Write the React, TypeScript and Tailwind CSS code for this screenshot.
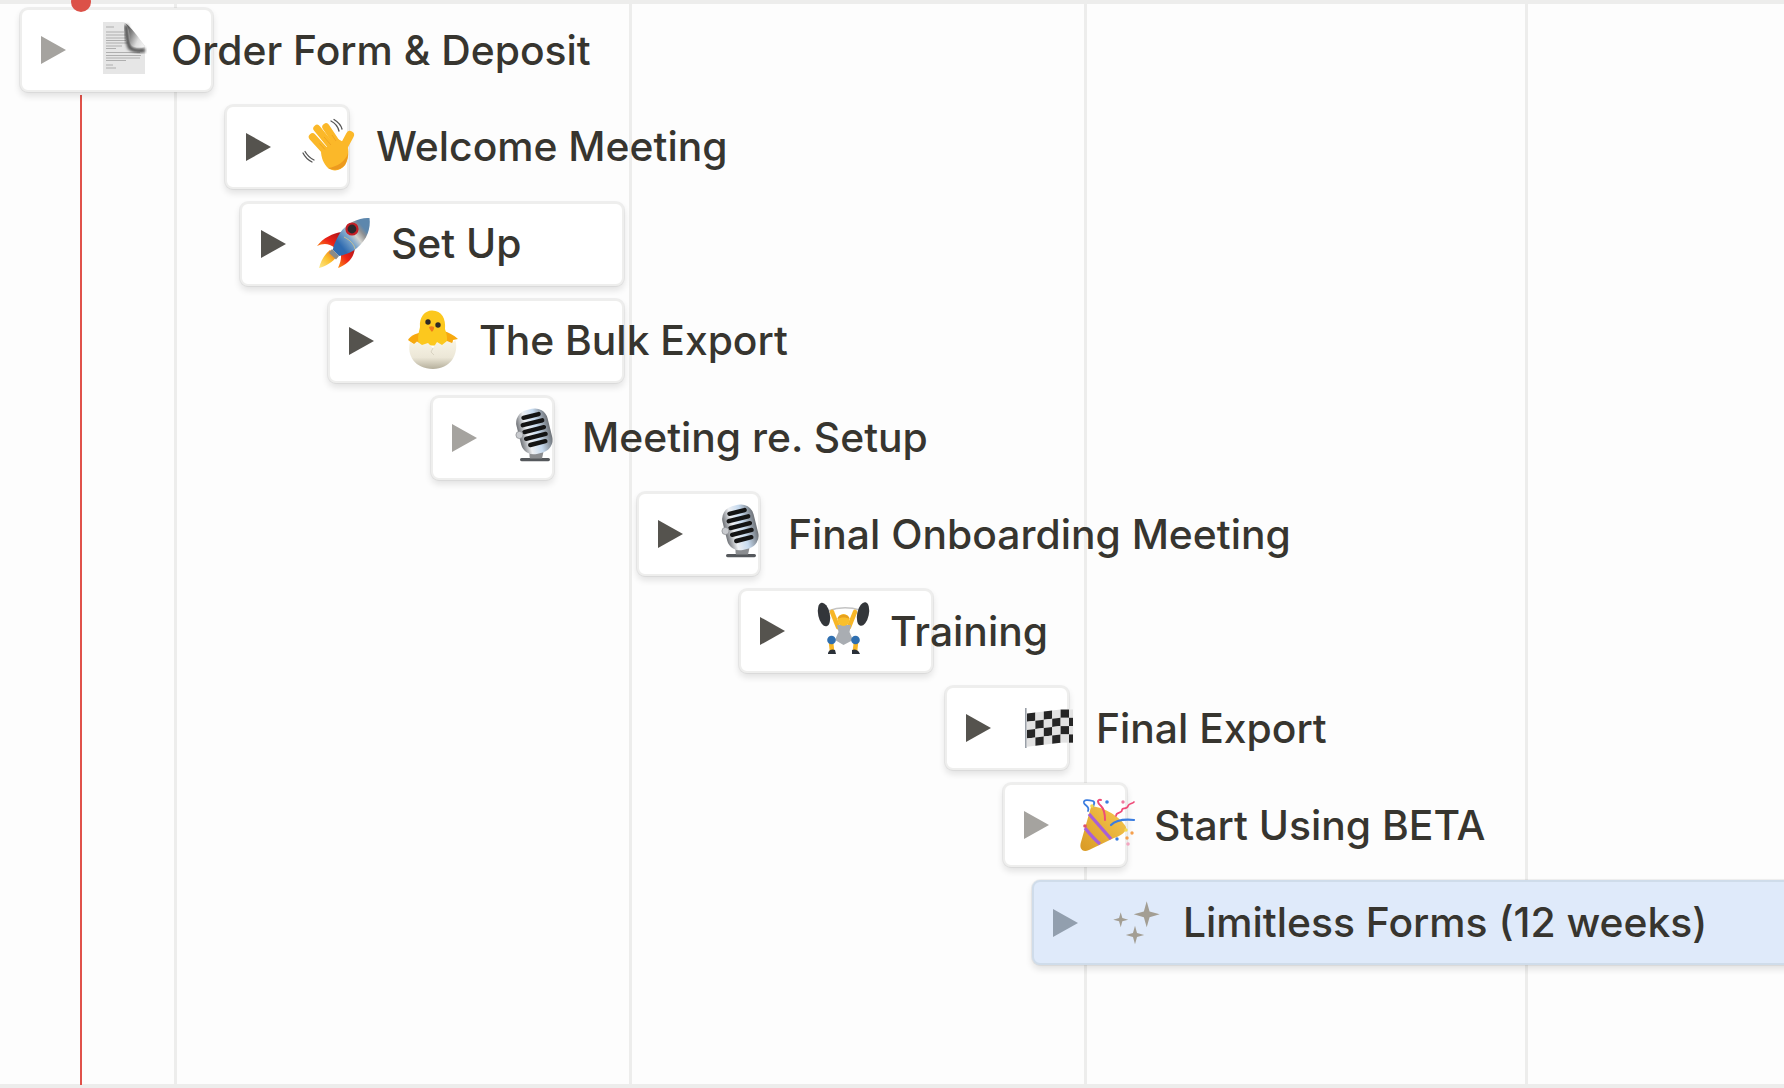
import React from 'react';

function Arrow({ color }: { color: string }) {
  return (
    <svg width="25" height="28" viewBox="0 0 25 28" className="shrink-0">
      <path d="M0 0 L25 14 L0 28 Z" fill={color} />
    </svg>
  );
}

function Slot({ view, children }: { view: string; children: React.ReactNode }) {
  return (
    <svg width="70" height="70" viewBox={view} className="shrink-0 ml-[23px] mr-[12px] overflow-visible">
      {children}
    </svg>
  );
}

function DocIcon() {
  const lines = [
    [16, 12, 24], [16, 17, 34], [16, 20, 36], [16, 23, 36], [16, 25.5, 36], [16, 28, 38], [16, 31, 32], [16, 33.5, 26],
    [16, 37.5, 50], [16, 40.5, 51], [16, 43, 50], [16, 45.5, 36], [16, 50, 23], [16, 53, 26],
  ];
  return (
    <Slot view="-1 0 70 70">
      <defs>
        <linearGradient id="docFold" x1="0" y1="0.2" x2="1" y2="0.7">
          <stop offset="0" stopColor="#3d3d3d" />
          <stop offset="0.4" stopColor="#858585" />
          <stop offset="0.75" stopColor="#dedede" />
          <stop offset="1" stopColor="#f0f0f0" />
        </linearGradient>
        <filter id="docBlur"><feGaussianBlur stdDeviation="1.8" /></filter>
        <filter id="docSoft"><feGaussianBlur stdDeviation="0.5" /></filter>
      </defs>
      <path d="M13 7 H33 C42 12 48 22 55 31 V59 H13 Z" fill="#e6e6e6" />
      <g filter="url(#docSoft)">
        {lines.map(([x, y, e], i) => (
          <path key={i} d={`M${x} ${y} H${e}`} stroke="#a8a8a8" strokeWidth="0.9" />
        ))}
      </g>
      <path d="M36 10 C37 18 37 28 40 33 C44 36 50 36 55 35" stroke="#4a4a4a" strokeWidth="4" fill="none" filter="url(#docBlur)" />
      <path d="M33 7 C38 9 39.5 16 39.5 23 C39.500 31 44 34 55 32 C48 22 42 12 33 7 Z" fill="url(#docFold)" filter="url(#docSoft)" />
    </Slot>
  );
}

function WaveIcon() {
  return (
    <Slot view="0 2 70 70">
      <g stroke="#fbb829" strokeWidth="7.4" strokeLinecap="round" fill="none">
        <path d="M18.500 27 L34 44" />
        <path d="M23 18.500 L38 37" />
        <path d="M32 17 L44 35" />
        <path d="M56 25 L49 38" strokeWidth="8" />
      </g>
      <path d="M27 41 L44 29 L53 34 C55 41 55 48 51 55 C47 61 39 62 34 58 C30 54 27 48 27 41 Z" fill="#fbb829" />
      <path d="M25.500 33.500 L31 39.500 M30 27 L37 35 M38 25 L42 31" stroke="#ee9f1f" strokeWidth="0.8" fill="none" />
      <path d="M34 58 C40 61 47 60 51 55 C53 51 54 47 54 43 C52 51 43 57 34 58 Z" fill="#ec9a1e" />
      <g stroke="#555" strokeWidth="1.3" fill="none" strokeLinecap="round">
        <path d="M37 11 C41 13 44 17 45 21" />
        <path d="M40 9.500 C44 12 47 15 48 19" />
        <path d="M9 43 C11 47 14 50 18 52" />
        <path d="M11 41.500 C13 45 16 48 20 50" />
      </g>
    </Slot>
  );
}

function RocketIcon() {
  return (
    <Slot view="0 -1 70 70">
      <defs>
        <linearGradient id="rkBody" x1="0.1" y1="0.6" x2="0.7" y2="0.1">
          <stop offset="0" stopColor="#2f6bb0" />
          <stop offset="0.4" stopColor="#7fa8cc" />
          <stop offset="0.62" stopColor="#d4d4d0" />
          <stop offset="0.85" stopColor="#8f9092" />
          <stop offset="1" stopColor="#5d87ad" />
        </linearGradient>
        <linearGradient id="rkFin" x1="1" y1="0" x2="0" y2="1">
          <stop offset="0" stopColor="#a5111a" />
          <stop offset="0.55" stopColor="#ee2417" />
          <stop offset="1" stopColor="#fb9419" />
        </linearGradient>
        <linearGradient id="rkFlame" x1="1" y1="0" x2="0" y2="1">
          <stop offset="0" stopColor="#ef5e12" />
          <stop offset="0.5" stopColor="#fbc02d" />
          <stop offset="1" stopColor="#fdeb8e" />
        </linearGradient>
      </defs>
      <path d="M33 22 C24 23 14 28 8 36 C14 33 20 33 26 38 Z" fill="url(#rkFin)" />
      <path d="M46 35 C46 46 41 53 29 58 C32 51 33 46 31 42 Z" fill="url(#rkFin)" />
      <path d="M21 40 C16 44 12 50 10 58 C17 56 24 52 28 46 Z" fill="url(#rkFlame)" />
      <path d="M60.500 8 C52 7 38 12 31 23 C27 30 24 36 24 40 L30 46 C35 45 42 43 48 38 C58 30 62 18 60.500 8 Z" fill="url(#rkBody)" />
      <path d="M35 27 C41 30 45 34 46 39" stroke="#d8c78a" strokeWidth="0.8" fill="none" />
      <circle cx="43" cy="19" r="6.6" fill="#c41f26" />
      <circle cx="43" cy="19" r="4.4" fill="#2a2a2e" />
      <path d="M23 39 L30 46 L27 49.500 L20 43 Z" fill="#8b8b86" />
    </Slot>
  );
}

function ChickIcon() {
  return (
    <Slot view="-3 1 70 70">
      <defs>
        <linearGradient id="eggFill" x1="0" y1="0" x2="0" y2="1">
          <stop offset="0" stopColor="#f8f4e6" />
          <stop offset="0.6" stopColor="#ece7d7" />
          <stop offset="1" stopColor="#b5af9c" />
        </linearGradient>
      </defs>
      <path d="M8 35 C11 30 17 28 23 27 L25 41 L15 40 Z" fill="#f7a90f" />
      <path d="M43 26 C48 27 54 30 58 34 L53 35 L52 41 L42 41 Z" fill="#f7a90f" />
      <path d="M19 40 C17 32 19 27 20 22 C19 12 25 5.500 32 5.500 C42 5.500 46 14 45 24 C47 30 48 35 46 41 Z" fill="#fcc81e" />
      <circle cx="28" cy="17" r="2.700" fill="#2d2a26" />
      <circle cx="38" cy="20" r="2.700" fill="#2d2a26" />
      <path d="M29 22 C31 20.500 35 21.500 34 23.500 C33.500 26 32 27 31.500 26.500 C31 26 29.500 24 29 22 Z" fill="#ee7a1b" />
      <path d="M10 37 L14 39 L17 36.500 L22 40 L28 38 L33 43 L37 37 L42 40 L47 36 L52 38 L55.500 35 C59 50 50 64 33 64 C15 64 6.500 50 10 37 Z" fill="url(#eggFill)" />
      <path d="M33 43 L31 47 L34 50" stroke="#c9c3b0" strokeWidth="0.6" fill="none" />
    </Slot>
  );
}

function MicIcon({ id }: { id: string }) {
  return (
    <Slot view="-5 3 70 70">
      <defs>
        <linearGradient id={id} x1="0" y1="0" x2="1" y2="0">
          <stop offset="0" stopColor="#6f7277" />
          <stop offset="0.28" stopColor="#eef0f3" />
          <stop offset="0.6" stopColor="#c7dbf0" />
          <stop offset="1" stopColor="#6f7378" />
        </linearGradient>
      </defs>
      <rect x="15" y="58" width="30" height="3.200" rx="1.600" fill="#55585c" />
      <path d="M24 50 C25 54 24 56 25 58.500 H37 C38 55 38 53 39 50 Z" fill="#8b8d90" />
      <g transform="rotate(-14 29 32)">
        <rect x="13.500" y="9" width="32" height="45" rx="13" fill={`url(#${id})`} />
        <g fill="#141414">
          <rect x="20" y="13.500" width="20" height="4.400" rx="2.200" />
          <rect x="17.500" y="20.500" width="24.500" height="4.400" rx="2.200" />
          <rect x="17.500" y="27.500" width="24.500" height="4.400" rx="2.200" />
          <rect x="17.500" y="34.500" width="24.500" height="4.400" rx="2.200" />
          <rect x="20" y="41.500" width="20" height="4.400" rx="2.200" />
        </g>
      </g>
      <circle cx="14.500" cy="35" r="3.600" fill="#c9cbcf" stroke="#85888d" strokeWidth="0.7" />
    </Slot>
  );
}

function LifterIcon() {
  return (
    <Slot view="-2 2 70 70">
      <path d="M18 17 C28 13 40 13 50 16" stroke="#c4c4c4" strokeWidth="1.500" fill="none" />
      <ellipse cx="14" cy="20.500" rx="5.800" ry="12" transform="rotate(-12 14 20.500)" fill="#33363a" />
      <ellipse cx="53" cy="20" rx="5.800" ry="12" transform="rotate(12 53 20)" fill="#33363a" />
      <g stroke="#f7b626" strokeWidth="4.600" strokeLinecap="round" fill="none">
        <path d="M22 18 L28 33" />
        <path d="M45 18 L39 33" />
        <path d="M21 48 L22 57" />
        <path d="M46 48 L45 57" />
      </g>
      <path d="M27 31 H41 L39.500 38 L43 46 L33.500 51 L25 46 L28.500 38 Z" fill="#a9adb2" />
      <circle cx="33.500" cy="26" r="6" fill="#f9bf2c" />
      <path d="M27.400 25 C28 19.500 39 19 39.700 25 C36 23 31 23 27.400 25 Z" fill="#e8a11c" />
      <circle cx="21.500" cy="46" r="4.300" fill="#2f6fb0" />
      <circle cx="45.500" cy="46" r="4.300" fill="#2f6fb0" />
      <path d="M18 59 C19 55 23 55 25 56 L26 60 H18 Z" fill="#2a3038" />
      <path d="M42 56 C44 55 48 55 50 60 H42 Z" fill="#2a3038" />
    </Slot>
  );
}

function FlagIcon() {
  // cloth waves a little, so each column is offset from its neighbours
  const wave = [3, 2, 1, 0, -1, -1, -1];
  const cellW = 8.4;
  const cellH = 8.3;
  const cells: React.ReactNode[] = [];
  for (let c = 0; c < 6; c++) {
    for (let r = 0; r < 4; r++) {
      const x1 = 13 + c * cellW;
      const x2 = c === 5 ? 59 : x1 + cellW;
      const y1 = 17.5 + r * cellH;
      const y2 = y1 + cellH;
      const pts = `${x1},${y1 + wave[c]} ${x2},${y1 + wave[c + 1]} ${x2},${y2 + wave[c + 1]} ${x1},${y2 + wave[c]}`;
      cells.push(<polygon key={`${c}-${r}`} points={pts} fill={(c + r) % 2 === 0 ? '#262626' : '#e2e2e2'} />);
    }
  }
  return (
    <Slot view="0 0 70 70">
      {cells}
      <rect x="11" y="15" width="1.600" height="40" fill="#9aa0a8" />
    </Slot>
  );
}

function PartyIcon() {
  return (
    <Slot view="2 0 70 70">
      <defs>
        <linearGradient id="coneFill" x1="0" y1="1" x2="1" y2="0">
          <stop offset="0" stopColor="#d99a25" />
          <stop offset="1" stopColor="#f7c950" />
        </linearGradient>
      </defs>
      <path d="M24 19 C21 16 27 13 23 11 C19 10 13 9 14 13 C15 16 20 16 18 21" stroke="#3b7de0" strokeWidth="1.800" fill="none" strokeLinecap="round" />
      <path d="M21 17 C30 15 50 26 56 37 C57 42 50 46 44 48 L19 60 C12 63 9 58 11 52 Z" fill="url(#coneFill)" />
      <path d="M31 10 C27 9 27 13 31 16 C34 19 35 24 35 30" stroke="#ef4a78" strokeWidth="2" fill="none" strokeLinecap="round" />
      <path d="M46 26 C46 21 52 24 52 20 C52 17 57 20 58 16 C59 13 62 14 64 12" stroke="#ef4a78" strokeWidth="1.700" fill="none" strokeLinecap="round" />
      <path d="M19 24 C26 32 34 41 41 49" stroke="#a95fd6" strokeWidth="3.400" fill="none" />
      <path d="M15 38 C19 43 25 50 30 54" stroke="#a95fd6" strokeWidth="3.400" fill="none" />
      <path d="M41 35 C46 30 54 29 64 30" stroke="#3b7de0" strokeWidth="2.200" fill="none" strokeLinecap="round" />
      <circle cx="22" cy="16" r="1.800" fill="#f5d94e" />
      <circle cx="37" cy="12" r="1.800" fill="#3b7de0" />
      <circle cx="53" cy="12" r="1.700" fill="#ef7aa0" />
      <circle cx="15" cy="36" r="1.800" fill="#e0506a" />
      <circle cx="56" cy="40" r="1.700" fill="#f5d94e" />
      <circle cx="62" cy="43" r="1.700" fill="#f5a04e" />
      <circle cx="57" cy="48" r="1.700" fill="#f5a04e" />
      <circle cx="58" cy="54" r="1.800" fill="#f2a6c0" />
      <circle cx="47" cy="49" r="1.700" fill="#3b7de0" />
    </Slot>
  );
}

function SparklesIcon() {
  const star = (cx: number, cy: number, r: number) => {
    const k = r * 0.22;
    return `M${cx} ${cy - r} L${cx + k} ${cy - k} L${cx + r} ${cy} L${cx + k} ${cy + k} L${cx} ${cy + r} L${cx - k} ${cy + k} L${cx - r} ${cy} L${cx - k} ${cy - k} Z`;
  };
  return (
    <Slot view="0 0 70 70">
      <path d={star(45.7, 26.3, 13)} fill="#a39e93" />
      <path d={star(19.7, 31.7, 7.5)} fill="#a39e93" />
      <path d={star(34, 47, 9.2)} fill="#a39e93" />
    </Slot>
  );
}

const rows = [
  { label: 'Order Form & Deposit', icon: <DocIcon />, box: 'ml-[20px] w-[193px]', arrow: '#a5a39f' },
  { label: 'Welcome Meeting', icon: <WaveIcon />, box: 'ml-[225px] w-[124px]', arrow: '#55534e' },
  { label: 'Set Up', icon: <RocketIcon />, box: 'ml-[240px] w-[384px]', arrow: '#55534e' },
  { label: 'The Bulk Export', icon: <ChickIcon />, box: 'ml-[328px] w-[296px]', arrow: '#55534e' },
  { label: 'Meeting re. Setup', icon: <MicIcon id="micA" />, box: 'ml-[431px] w-[123px]', arrow: '#a5a39f' },
  { label: 'Final Onboarding Meeting', icon: <MicIcon id="micB" />, box: 'ml-[637px] w-[123px]', arrow: '#55534e' },
  { label: 'Training', icon: <LifterIcon />, box: 'ml-[739px] w-[194px]', arrow: '#55534e' },
  { label: 'Final Export', icon: <FlagIcon />, box: 'ml-[945px] w-[124px]', arrow: '#55534e' },
  { label: 'Start Using BETA', icon: <PartyIcon />, box: 'ml-[1003px] w-[124px]', arrow: '#a5a39f' },
];

export default function App() {
  return (
    <div className="relative w-[1784px] h-[1088px] overflow-hidden bg-[#fdfdfd] font-['Inter',sans-serif] text-[#37352f]">
      {/* gantt grid */}
      <div className="absolute top-0 left-0 w-full h-[4px] bg-[#ededec]" />
      <div className="absolute top-[1084px] left-0 w-full h-[4px] bg-[#ededec]" />
      <div className="absolute top-0 left-[174px] w-[3px] h-[1085px] bg-[#ededec]" />
      <div className="absolute top-0 left-[629px] w-[3px] h-[1085px] bg-[#ededec]" />
      <div className="absolute top-0 left-[1084px] w-[3px] h-[1085px] bg-[#ededec]" />
      <div className="absolute top-0 left-[1525px] w-[3px] h-[1085px] bg-[#ededec]" />
      {/* today marker */}
      <div className="absolute top-[95px] left-[80px] w-[2px] h-[990px] bg-[#e0524a]" />

      <div className="relative flex flex-col gap-[12.9px] pt-[8px]">
        {rows.map((r) => (
          <div
            key={r.label}
            className={`${r.box} h-[84px] flex items-center pl-[19px] rounded-[8px] bg-white border-2 border-[#eeeeed] shadow-[0_0_0_1px_rgba(15,15,15,0.05),0_4px_7px_rgba(15,15,15,0.12)]`}
          >
            <Arrow color={r.arrow} />
            {r.icon}
            <span className="whitespace-nowrap text-[40.8px] font-medium leading-none">{r.label}</span>
          </div>
        ))}
        <div className="ml-[1032px] w-[800px] h-[85px] flex items-center pl-[19px] rounded-[8px] bg-[#dfeafa] border-2 border-[#cfdcea] shadow-[0_0_0_1px_rgba(15,15,15,0.05),0_4px_7px_rgba(15,15,15,0.12)]">
          <Arrow color="#929fae" />
          <SparklesIcon />
          <span className="whitespace-nowrap text-[40.8px] font-medium leading-none">Limitless Forms (12 weeks)</span>
        </div>
      </div>

      <div className="absolute top-[-8px] left-[71px] w-[20px] h-[20px] rounded-full bg-[#dc5148]" />
    </div>
  );
}
